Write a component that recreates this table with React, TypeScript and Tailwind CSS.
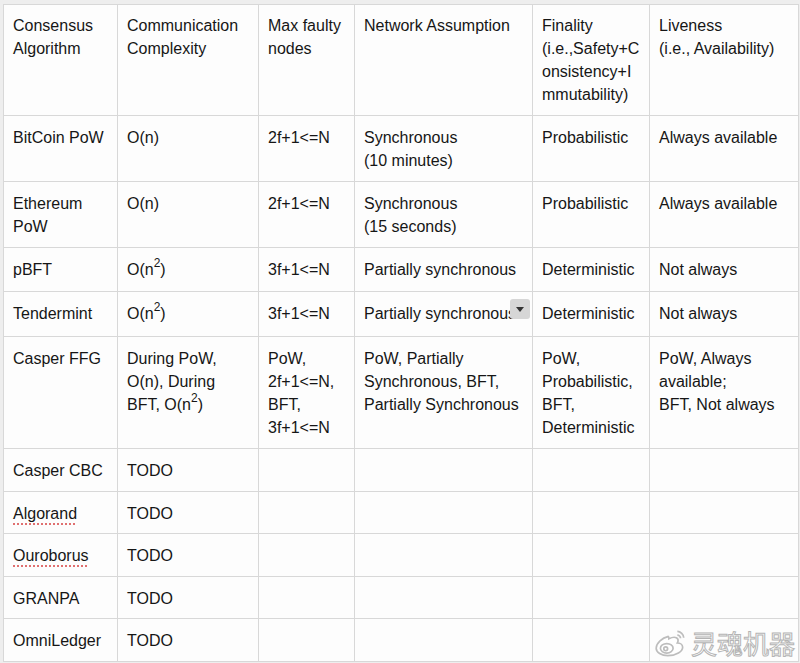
import React from "react";

type Cell = React.ReactNode;

const n2 = (
  <>
    O(n<sup className="text-[12px] leading-none relative -top-[2px] align-super">2</sup>)
  </>
);

const spell = (t: string) => (
  <span className="underline decoration-dotted decoration-[#e07070] decoration-[1.5px] underline-offset-[4px]">{t}</span>
);

const header: Cell[] = [
  <>Consensus<br />Algorithm</>,
  <>Communication<br />Complexity</>,
  <>Max faulty<br />nodes</>,
  "Network Assumption",
  <>Finality<br />(i.e.,Safety+C<br />onsistency+I<br />mmutability)</>,
  <>Liveness<br />(i.e., Availability)</>,
];

const rows: Cell[][] = [
  ["BitCoin PoW", "O(n)", "2f+1<=N", <>Synchronous<br />(10 minutes)</>, "Probabilistic", "Always available"],
  [<>Ethereum<br />PoW</>, "O(n)", "2f+1<=N", <>Synchronous<br />(15 seconds)</>, "Probabilistic", "Always available"],
  ["pBFT", n2, "3f+1<=N", "Partially synchronous", "Deterministic", "Not always"],
  ["Tendermint", n2, "3f+1<=N", "tender", "Deterministic", "Not always"],
  [
    "Casper FFG",
    <>During PoW,<br />O(n), During<br />BFT, {n2}</>,
    <>PoW,<br />2f+1&lt;=N,<br />BFT,<br />3f+1&lt;=N</>,
    <>PoW, Partially<br />Synchronous, BFT,<br />Partially Synchronous</>,
    <>PoW,<br />Probabilistic,<br />BFT,<br />Deterministic</>,
    <>PoW, Always<br />available;<br />BFT, Not always</>,
  ],
  ["Casper CBC", "TODO", "", "", "", ""],
  [spell("Algorand"), "TODO", "", "", "", ""],
  [spell("Ouroborus"), "TODO", "", "", "", ""],
  ["GRANPA", "TODO", "", "", "", ""],
  ["OmniLedger", "TODO", "", "", "", ""],
];

// row heights read off the screenshot
const rowH = ["h-[66px]", "h-[66px]", "h-[44px]", "h-[45px]", "h-[112px]", "h-[43px]", "h-[42px]", "h-[43px]", "h-[42px]", "h-[43px]"];

const widths = ["w-[114px]", "w-[141px]", "w-[96px]", "w-[178px]", "w-[117px]", "w-[149px]"];

function TenderCell() {
  return (
    <div className="relative">
      <span className="whitespace-nowrap">Partially synchronous</span>
      <div className="absolute -right-[6px] top-[-3px] w-[20px] h-[20px] rounded-[3px] bg-[#d6d6d6] flex items-center justify-center">
        <div className="w-0 h-0 border-l-[4px] border-r-[4px] border-t-[5px] border-l-transparent border-r-transparent border-t-[#333]" />
      </div>
    </div>
  );
}

function WeiboLogo() {
  return (
    <svg width="36" height="30" viewBox="0 0 34 28" fill="none" stroke="#bdbdbd" strokeWidth="1.6">
      <path d="M14 8c-5 1-11 6-11 11 0 4 5 7 11 7 8 0 14-4 14-8 0-3-3-4-5-4 1-2 1-4-1-5-2-1-5 0-7 1 0-2-1-3-1-2z" fill="#fff" />
      <ellipse cx="13" cy="19" rx="6" ry="4.5" />
      <circle cx="12" cy="19.5" r="1.8" />
      <path d="M23 3c3 0 6 3 6 6" />
      <path d="M23 6.5c1.5 0 3 1.5 3 3" />
    </svg>
  );
}

export default function App() {
  return (
    <div className="w-[800px] h-[663px] bg-[#eeeeee] pt-[4px] pl-[3px] relative overflow-hidden font-['Liberation_Sans',Arial,sans-serif] text-[16px] leading-[23px] text-[#161616]">
      <table className="table-fixed border-collapse bg-[#fdfdfd] w-[795px]">
        <colgroup>
          {widths.map((w, i) => (
            <col key={i} className={w} />
          ))}
        </colgroup>
        <tbody>
          <tr>
            {header.map((c, i) => (
              <td key={i} className="border border-[#d8d8d8] align-top py-[9px] pl-[9px] pr-[8px]">
                {c}
              </td>
            ))}
          </tr>
          {rows.map((r, ri) => (
            <tr key={ri} className={rowH[ri]}>
              {r.map((c, ci) => (
                <td key={ci} className="border border-[#d8d8d8] align-top pt-[10px] pb-[6px] pl-[9px] pr-[8px]">
                  {c === "tender" ? <TenderCell /> : c}
                </td>
              ))}
            </tr>
          ))}
        </tbody>
      </table>
      <div className="absolute right-[5px] bottom-[5px] flex items-end gap-[2px]">
        <WeiboLogo />
        <span className="font-['Noto_Sans_CJK_SC',sans-serif] text-[26px] leading-[30px] text-white [-webkit-text-stroke:1px_#b4b4b4]">
          灵魂机器
        </span>
      </div>
    </div>
  );
}
